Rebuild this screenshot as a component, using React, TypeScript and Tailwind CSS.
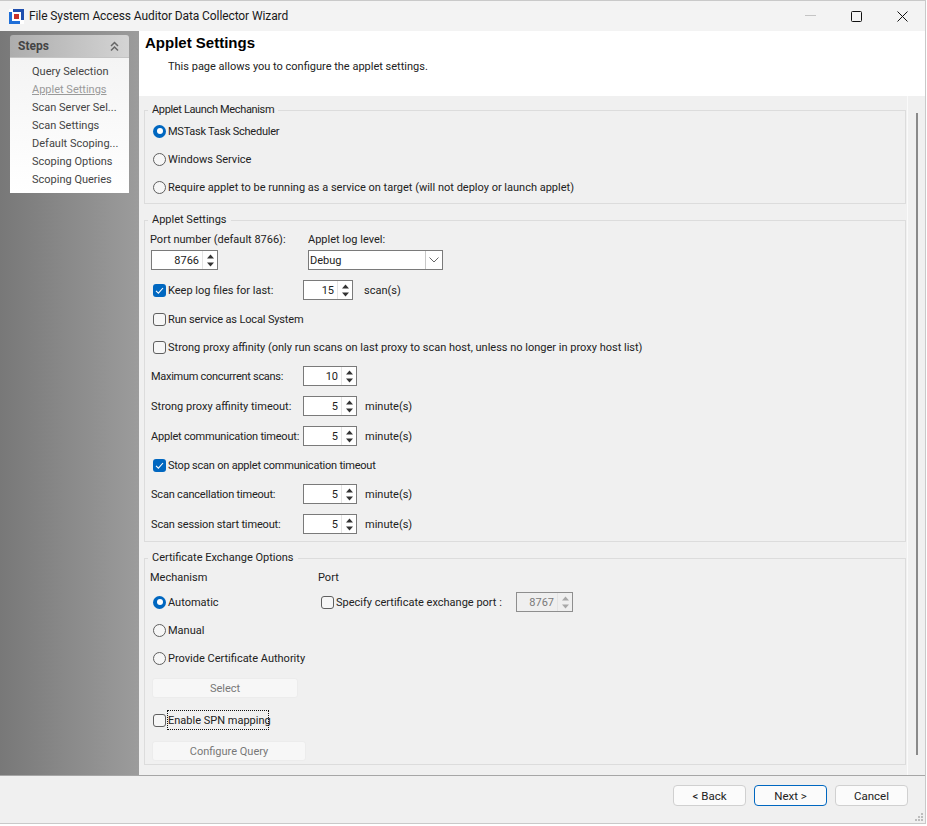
import React from 'react';

function Check({ checked = false }: { checked?: boolean }) {
  return checked ? (
    <span className="w-[13px] h-[13px] rounded-[3px] bg-[#0067c0] flex items-center justify-center shrink-0">
      <svg width="11" height="11" viewBox="0 0 11 11" fill="none"><path d="M2 5.8 4.4 8.2 9 3" stroke="#fff" strokeWidth="1.1" /></svg>
    </span>
  ) : (
    <span className="w-[13px] h-[13px] rounded-[3px] border border-[#5f5f5f] bg-[#f6f6f6] shrink-0" />
  );
}

function Radio({ checked = false }: { checked?: boolean }) {
  return checked ? (
    <span className="w-[13px] h-[13px] rounded-full bg-[#0067c0] flex items-center justify-center shrink-0">
      <span className="w-[6px] h-[6px] rounded-full bg-white" />
    </span>
  ) : (
    <span className="w-[13px] h-[13px] rounded-full border border-[#5f5f5f] bg-[#f6f6f6] shrink-0" />
  );
}

function T({ children, className = '' }: { children: React.ReactNode; className?: string }) {
  return <span className={`pt-[2px] ${className}`}>{children}</span>;
}

function Spin({ value, w = 'w-[54px]', disabled = false }: { value: string; w?: string; disabled?: boolean }) {
  const c = disabled ? '#a8a8a8' : '#333';
  return (
    <div className={`${w} h-[20px] border ${disabled ? 'border-[#8e8e8e] bg-[#efefef] text-[#7a7a7a]' : 'border-[#7a7a7a] bg-white text-[#222]'} flex items-stretch shrink-0`}>
      <span className="flex-1 text-right pr-[3px] leading-[20px] h-[18px]">{value}</span>
      <span className="w-[15px] flex flex-col items-center justify-around py-[1px] border-l border-[#e4e4e4]">
        <svg width="9" height="5" viewBox="0 0 9 5"><path d="M4.5 0.5 8 4.5H1Z" fill={c} /></svg>
        <svg width="9" height="5" viewBox="0 0 9 5"><path d="M4.5 4.5 8 0.5H1Z" fill={c} /></svg>
      </span>
    </div>
  );
}

function Group({ title, h, mt, children, tight = false }: { title: string; h: string; mt: string; children: React.ReactNode; tight?: boolean }) {
  return (
    <section className={`relative ${h} ${mt} border border-[#dcdcdc]`}>
      <span className={`absolute left-[3px] top-[-9px] px-[4px] bg-[#f0f0f0] leading-[16px] text-[#222] whitespace-nowrap ${tight ? 'tracking-[-0.35px]' : ''}`}>{title}</span>
      {children}
    </section>
  );
}

const steps = ['Query Selection', 'Applet Settings', 'Scan Server Sel...', 'Scan Settings', 'Default Scoping...', 'Scoping Options', 'Scoping Queries'];

function TimeoutRow({ label, value, mt, unit = true, track = '' }: { label: string; value: string; mt: string; unit?: boolean; track?: string }) {
  return (
    <div className={`flex items-center h-[20px] ${mt}`}>
      <span className={`w-[158px] pl-[6px] pt-[2px] shrink-0 whitespace-nowrap ${track}`}>{label}</span>
      <Spin value={value} />
      {unit && <T className="ml-[8px]">minute(s)</T>}
    </div>
  );
}

export default function App() {
  return (
    <div className="w-[926px] h-[824px] flex flex-col bg-[#f0f0f0] text-[11px] text-[#222] overflow-hidden border-t border-r border-b border-[#c9c9c9] whitespace-nowrap" style={{ fontFamily: 'Roboto, sans-serif' }}>
      <header className="h-[30px] shrink-0 flex items-center bg-[#f3f3f3]">
        <svg className="ml-[9px]" width="15" height="15" viewBox="0 0 15 15">
          <rect width="15" height="15" fill="#fff" />
          <path d="M4 0H15V11H12V3H4Z" fill="#1f4fae" />
          <path d="M0 3H3V12H11V15H0Z" fill="#1f6fd8" />
          <rect x="5" y="5" width="5" height="5" fill="#c8342c" />
        </svg>
        <span className="ml-[5px] text-[12px] tracking-[-0.1px] text-[#1a1a1a]">File System Access Auditor Data Collector Wizard</span>
        <div className="ml-auto flex items-center h-full">
          <span className="w-[46px] flex justify-center"><svg width="11" height="2"><rect width="11" height="1" fill="#c4c4c4" /></svg></span>
          <span className="w-[46px] flex justify-center"><svg width="11" height="11" viewBox="0 0 11 11" fill="none"><rect x="0.5" y="0.5" width="10" height="10" rx="1" stroke="#111" /></svg></span>
          <span className="w-[46px] flex justify-center"><svg width="11" height="11" viewBox="0 0 11 11" fill="none"><path d="M0.5 0.5 10.5 10.5M10.5 0.5 0.5 10.5" stroke="#111" /></svg></span>
        </div>
      </header>

      <div className="h-[744px] shrink-0 flex">
        <aside className="w-[139px] shrink-0 bg-gradient-to-r from-[#787878] to-[#9c9c9c] pt-[4px] pl-[10px] pr-[10px]">
          <div className="h-[23px] rounded-t-[3px] bg-gradient-to-r from-[#adadad] to-[#d4d4d4] flex items-center justify-between pl-[8px] pr-[10px] border-b border-[#c4c4c4]">
            <span className="font-bold text-[12px] text-[#444]">Steps</span>
            <svg width="9" height="11" viewBox="0 0 9 11" fill="none" stroke="#666" strokeWidth="1.5"><path d="M1 5 4.5 1.5 8 5M1 9.5 4.5 6 8 9.5" /></svg>
          </div>
          <div className="h-[135px] bg-gradient-to-b from-[#f4f4f4] to-white pt-[4px] pl-[22px]">
            {steps.map((s) => (
              <div key={s} className={`h-[18px] leading-[20px] ${s === 'Applet Settings' ? 'text-[#9a9a9a] underline' : 'text-[#444]'}`}>{s}</div>
            ))}
          </div>
        </aside>

        <main className="flex-1 flex flex-col min-w-0">
          <div className="h-[65px] shrink-0 bg-white">
            <h1 className="pl-[6px] pt-[3px] text-[15px] leading-[18px] font-bold text-black" style={{ fontFamily: '"Liberation Sans", sans-serif' }}>Applet Settings</h1>
            <p className="pl-[29px] pt-[7px] leading-[16px]">This page allows you to configure the applet settings.</p>
          </div>
          <div className="flex-1 flex min-h-0">
            <div className="w-[769px] shrink-0 border-r border-[#fafafa] pl-[5px] pt-[14px] pr-[1px]">
              <Group title="Applet Launch Mechanism" h="h-[94px]" mt="mt-0" tight>
                <div className="pt-[6px] pl-[8px]">
                  <label className="h-[28px] flex items-center gap-[2px]"><Radio checked /><T className="tracking-[-0.25px]">MSTask Task Scheduler</T></label>
                  <label className="h-[28px] flex items-center gap-[2px]"><Radio /><T>Windows Service</T></label>
                  <label className="h-[28px] flex items-center gap-[2px]"><Radio /><T>Require applet to be running as a service on target (will not deploy or launch applet)</T></label>
                </div>
              </Group>

              <Group title="Applet Settings" h="h-[322px]" mt="mt-[16px]">
                <div className="pt-[9px]">
                  <div className="flex h-[18px] items-center">
                    <span className="w-[163px] pl-[5px] pt-[2px] shrink-0">Port number (default 8766):</span>
                    <T>Applet log level:</T>
                  </div>
                  <div className="flex h-[20px] mt-[2px]">
                    <div className="w-[163px] pl-[6px] shrink-0"><Spin value="8766" w="w-[67px]" /></div>
                    <div className="w-[135px] h-[20px] border border-[#7a7a7a] bg-white flex items-center">
                      <span className="flex-1 pl-[1px] pt-[2px]">Debug</span>
                      <span className="w-[17px] h-full border-l border-[#c8c8c8] flex items-center justify-center">
                        <svg width="10" height="6" viewBox="0 0 10 6" fill="none"><path d="M0.5 0.5 5 5 9.5 0.5" stroke="#666" /></svg>
                      </span>
                    </div>
                  </div>
                  <div className="flex items-center h-[20px] mt-[10px]">
                    <div className="w-[158px] pl-[8px] flex items-center gap-[2px] shrink-0"><Check checked /><T>Keep log files for last:</T></div>
                    <Spin value="15" w="w-[50px]" />
                    <T className="ml-[11px]">scan(s)</T>
                  </div>
                  <div className="flex items-center h-[20px] mt-[9px] pl-[8px] gap-[2px]"><Check /><T className="tracking-[-0.15px]">Run service as Local System</T></div>
                  <div className="flex items-center h-[20px] mt-[8px] pl-[8px] gap-[2px]"><Check /><T>Strong proxy affinity (only run scans on last proxy to scan host, unless no longer in proxy host list)</T></div>
                  <TimeoutRow label="Maximum concurrent scans:" value="10" mt="mt-[9px]" unit={false} track="tracking-[-0.28px]" />
                  <TimeoutRow label="Strong proxy affinity timeout:" value="5" mt="mt-[10px]" />
                  <TimeoutRow label="Applet communication timeout:" value="5" mt="mt-[10px]" track="tracking-[-0.2px]" />
                  <div className="flex items-center h-[20px] mt-[9px] pl-[8px] gap-[2px]"><Check checked /><T className="tracking-[-0.22px]">Stop scan on applet communication timeout</T></div>
                  <TimeoutRow label="Scan cancellation timeout:" value="5" mt="mt-[9px]" track="tracking-[-0.2px]" />
                  <TimeoutRow label="Scan session start timeout:" value="5" mt="mt-[10px]" track="tracking-[-0.15px]" />
                </div>
              </Group>

              <Group title="Certificate Exchange Options" h="h-[207px]" mt="mt-[16px]">
                <div className="flex pt-[9px]">
                  <div className="w-[173px] shrink-0">
                    <div className="h-[18px] leading-[20px] pl-[5px]">Mechanism</div>
                    <label className="h-[28px] mt-[2px] flex items-center gap-[2px] pl-[8px]"><Radio checked /><T>Automatic</T></label>
                    <label className="h-[28px] flex items-center gap-[2px] pl-[8px]"><Radio /><T>Manual</T></label>
                    <label className="h-[28px] flex items-center gap-[2px] pl-[8px]"><Radio /><T>Provide Certificate Authority</T></label>
                    <button className="block w-[146px] h-[20px] ml-[7px] mt-[6px] pt-[2px] rounded-[3px] bg-[#f7f7f7] border border-[#ececec] text-[#777]">Select</button>
                    <div className="flex items-center h-[20px] mt-[12px] pl-[8px] gap-[2px]">
                      <Check />
                      <span className="outline-1 outline-dotted outline-[#111] leading-[20px] w-[100px] h-[18px]">Enable SPN mapping</span>
                    </div>
                    <button className="block w-[154px] h-[20px] ml-[7px] mt-[11px] pt-[2px] rounded-[3px] bg-[#f7f7f7] border border-[#ececec] text-[#777]">Configure Query</button>
                  </div>
                  <div>
                    <div className="h-[18px] leading-[20px]">Port</div>
                    <div className="mt-[2px] h-[28px] flex items-center gap-[2px] pl-[3px]">
                      <Check />
                      <span className="w-[178px] pt-[2px] shrink-0">Specify certificate exchange port :</span>
                      <Spin value="8767" w="w-[57px]" disabled />
                    </div>
                  </div>
                </div>
              </Group>
            </div>
            <div className="flex-1 relative">
              <div className="absolute left-[8px] top-[17px] w-[2px] h-[642px] bg-[#8a8a8a]" />
            </div>
          </div>
        </main>
      </div>

      <footer className="relative flex-1 border-t border-[#a6a6a6] flex justify-end gap-[8px] pt-[9px] pr-[17px] text-[11.5px]">
        <button className="w-[73px] h-[21px] pt-[2px] rounded-[4px] bg-[#fbfbfb] border border-[#d0d0d0]">&lt; Back</button>
        <button className="w-[73px] h-[21px] pt-[2px] rounded-[4px] bg-[#fbfbfb] border border-[#0067c0]">Next &gt;</button>
        <button className="w-[73px] h-[21px] pt-[2px] rounded-[4px] bg-[#fbfbfb] border border-[#d0d0d0]">Cancel</button>
        <svg className="absolute right-[1px] bottom-[1px]" width="9" height="9" viewBox="0 0 9 9" fill="#bdbdbd">
          <rect x="6" y="0" width="2" height="2" /><rect x="3" y="3" width="2" height="2" /><rect x="6" y="3" width="2" height="2" /><rect x="0" y="6" width="2" height="2" /><rect x="3" y="6" width="2" height="2" /><rect x="6" y="6" width="2" height="2" />
        </svg>
      </footer>
    </div>
  );
}
